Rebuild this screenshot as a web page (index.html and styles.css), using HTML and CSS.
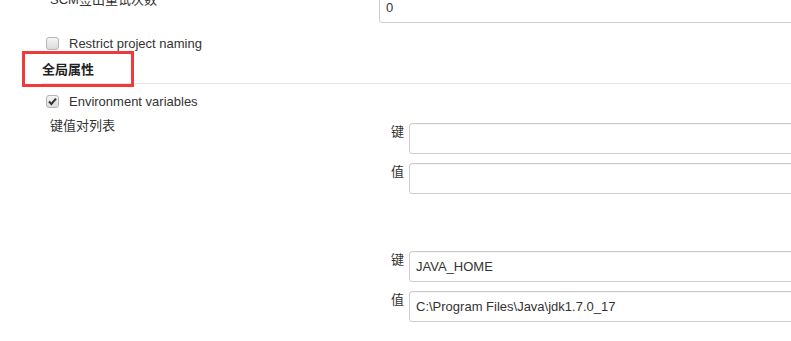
FILE: index.html
```html
<!DOCTYPE html>
<html lang="zh-CN">
<head>
    <meta charset="UTF-8">
    <title>系统配置</title>
    <link rel="stylesheet" href="styles.css">
</head>
<body>
    <div class="config">
        <div class="row first">
            <div class="row-label">SCM签出重试次数</div>
            <div class="row-field"><input class="text-input" type="text" value="0"></div>
        </div>

        <label class="check-row">
            <span class="checkbox"></span>
            <span>Restrict project naming</span>
        </label>

        <div class="section">
            <div class="section-title">全局属性</div>
            <div class="mark"></div>
        </div>

        <label class="check-row env">
            <span class="checkbox checked">
                <svg viewBox="0 0 13 13" width="13" height="13"><path d="M3 6.5 L5.4 9 L10 3.6" fill="none" stroke="#333" stroke-width="2"/></svg>
            </span>
            <span>Environment variables</span>
        </label>

        <div class="kv">
            <div class="kv-label">键值对列表</div>
            <div class="kv-list">
                <div class="kv-entry">
                    <div class="pair"><span class="pair-label">键</span><input class="text-input" type="text"></div>
                    <div class="pair"><span class="pair-label">值</span><input class="text-input" type="text"></div>
                </div>
                <div class="kv-entry">
                    <div class="pair"><span class="pair-label">键</span><input class="text-input" type="text" value="JAVA_HOME"></div>
                    <div class="pair"><span class="pair-label">值</span><input class="text-input" type="text" value="C:\Program Files\Java\jdk1.7.0_17"></div>
                </div>
            </div>
        </div>
    </div>
</body>
</html>
```

FILE: styles.css
```css
body {
    margin: 0;
    background: #fff;
    color: #333;
    font-family: 'Liberation Sans', 'Noto Sans CJK SC', sans-serif;
    font-size: 13px;
    overflow: hidden;
}
.config {
    width: 791px;
    overflow: hidden;
}
.row {
    display: flex;
    align-items: flex-start;
}
.row.first {
    margin-top: -8px;
}
.row-label {
    flex: none;
    width: 329px;
    padding-left: 50px;
    margin-top: -3px;
}
.row-field {
    flex: none;
}
.text-input {
    flex: none;
    box-sizing: border-box;
    width: 500px;
    height: 31px;
    border: 1px solid #ccc;
    border-radius: 3px;
    padding: 0 6px;
    font-family: 'Liberation Sans', 'Noto Sans CJK SC', sans-serif;
    font-size: 13px;
    color: #333;
    background: #fff;
    box-shadow: inset 0 1px 1px rgba(0,0,0,0.05);
}
.check-row {
    display: flex;
    align-items: center;
    gap: 10px;
    padding-left: 46px;
    height: 20px;
    margin-top: 10px;
}
.checkbox {
    box-sizing: border-box;
    width: 13px;
    height: 13px;
    border: 1px solid #b5b5b5;
    border-radius: 3px;
    background: linear-gradient(#f4f4f4, #dcdcdc);
    display: flex;
}
.checkbox svg {
    margin: -1px;
}
.section {
    position: relative;
    margin-left: 42px;
    padding-top: 6px;
    height: 24px;
    border-bottom: 1px solid #e3e3e3;
}
.section-title {
    font-weight: bold;
    font-size: 13px;
    color: #222;
}
.mark {
    position: absolute;
    left: -20px;
    top: -2px;
    width: 106px;
    height: 30px;
    border: 3px solid #f0393b;
}
.check-row.env {
    margin-top: 7px;
}
.kv {
    display: flex;
    align-items: flex-start;
    margin-top: 4px;
}
.kv-label {
    flex: none;
    box-sizing: border-box;
    width: 391px;
    padding-left: 50px;
}
.kv-list {
    flex: none;
    display: flex;
    flex-direction: column;
    gap: 57px;
    padding-top: 8px;
}
.kv-entry {
    display: flex;
    flex-direction: column;
    gap: 9px;
}
.pair {
    display: flex;
    align-items: flex-start;
    gap: 4px;
}
.pair-label {
    flex: none;
    width: 14px;
    line-height: 16px;
    margin-top: 1px;
}
```
